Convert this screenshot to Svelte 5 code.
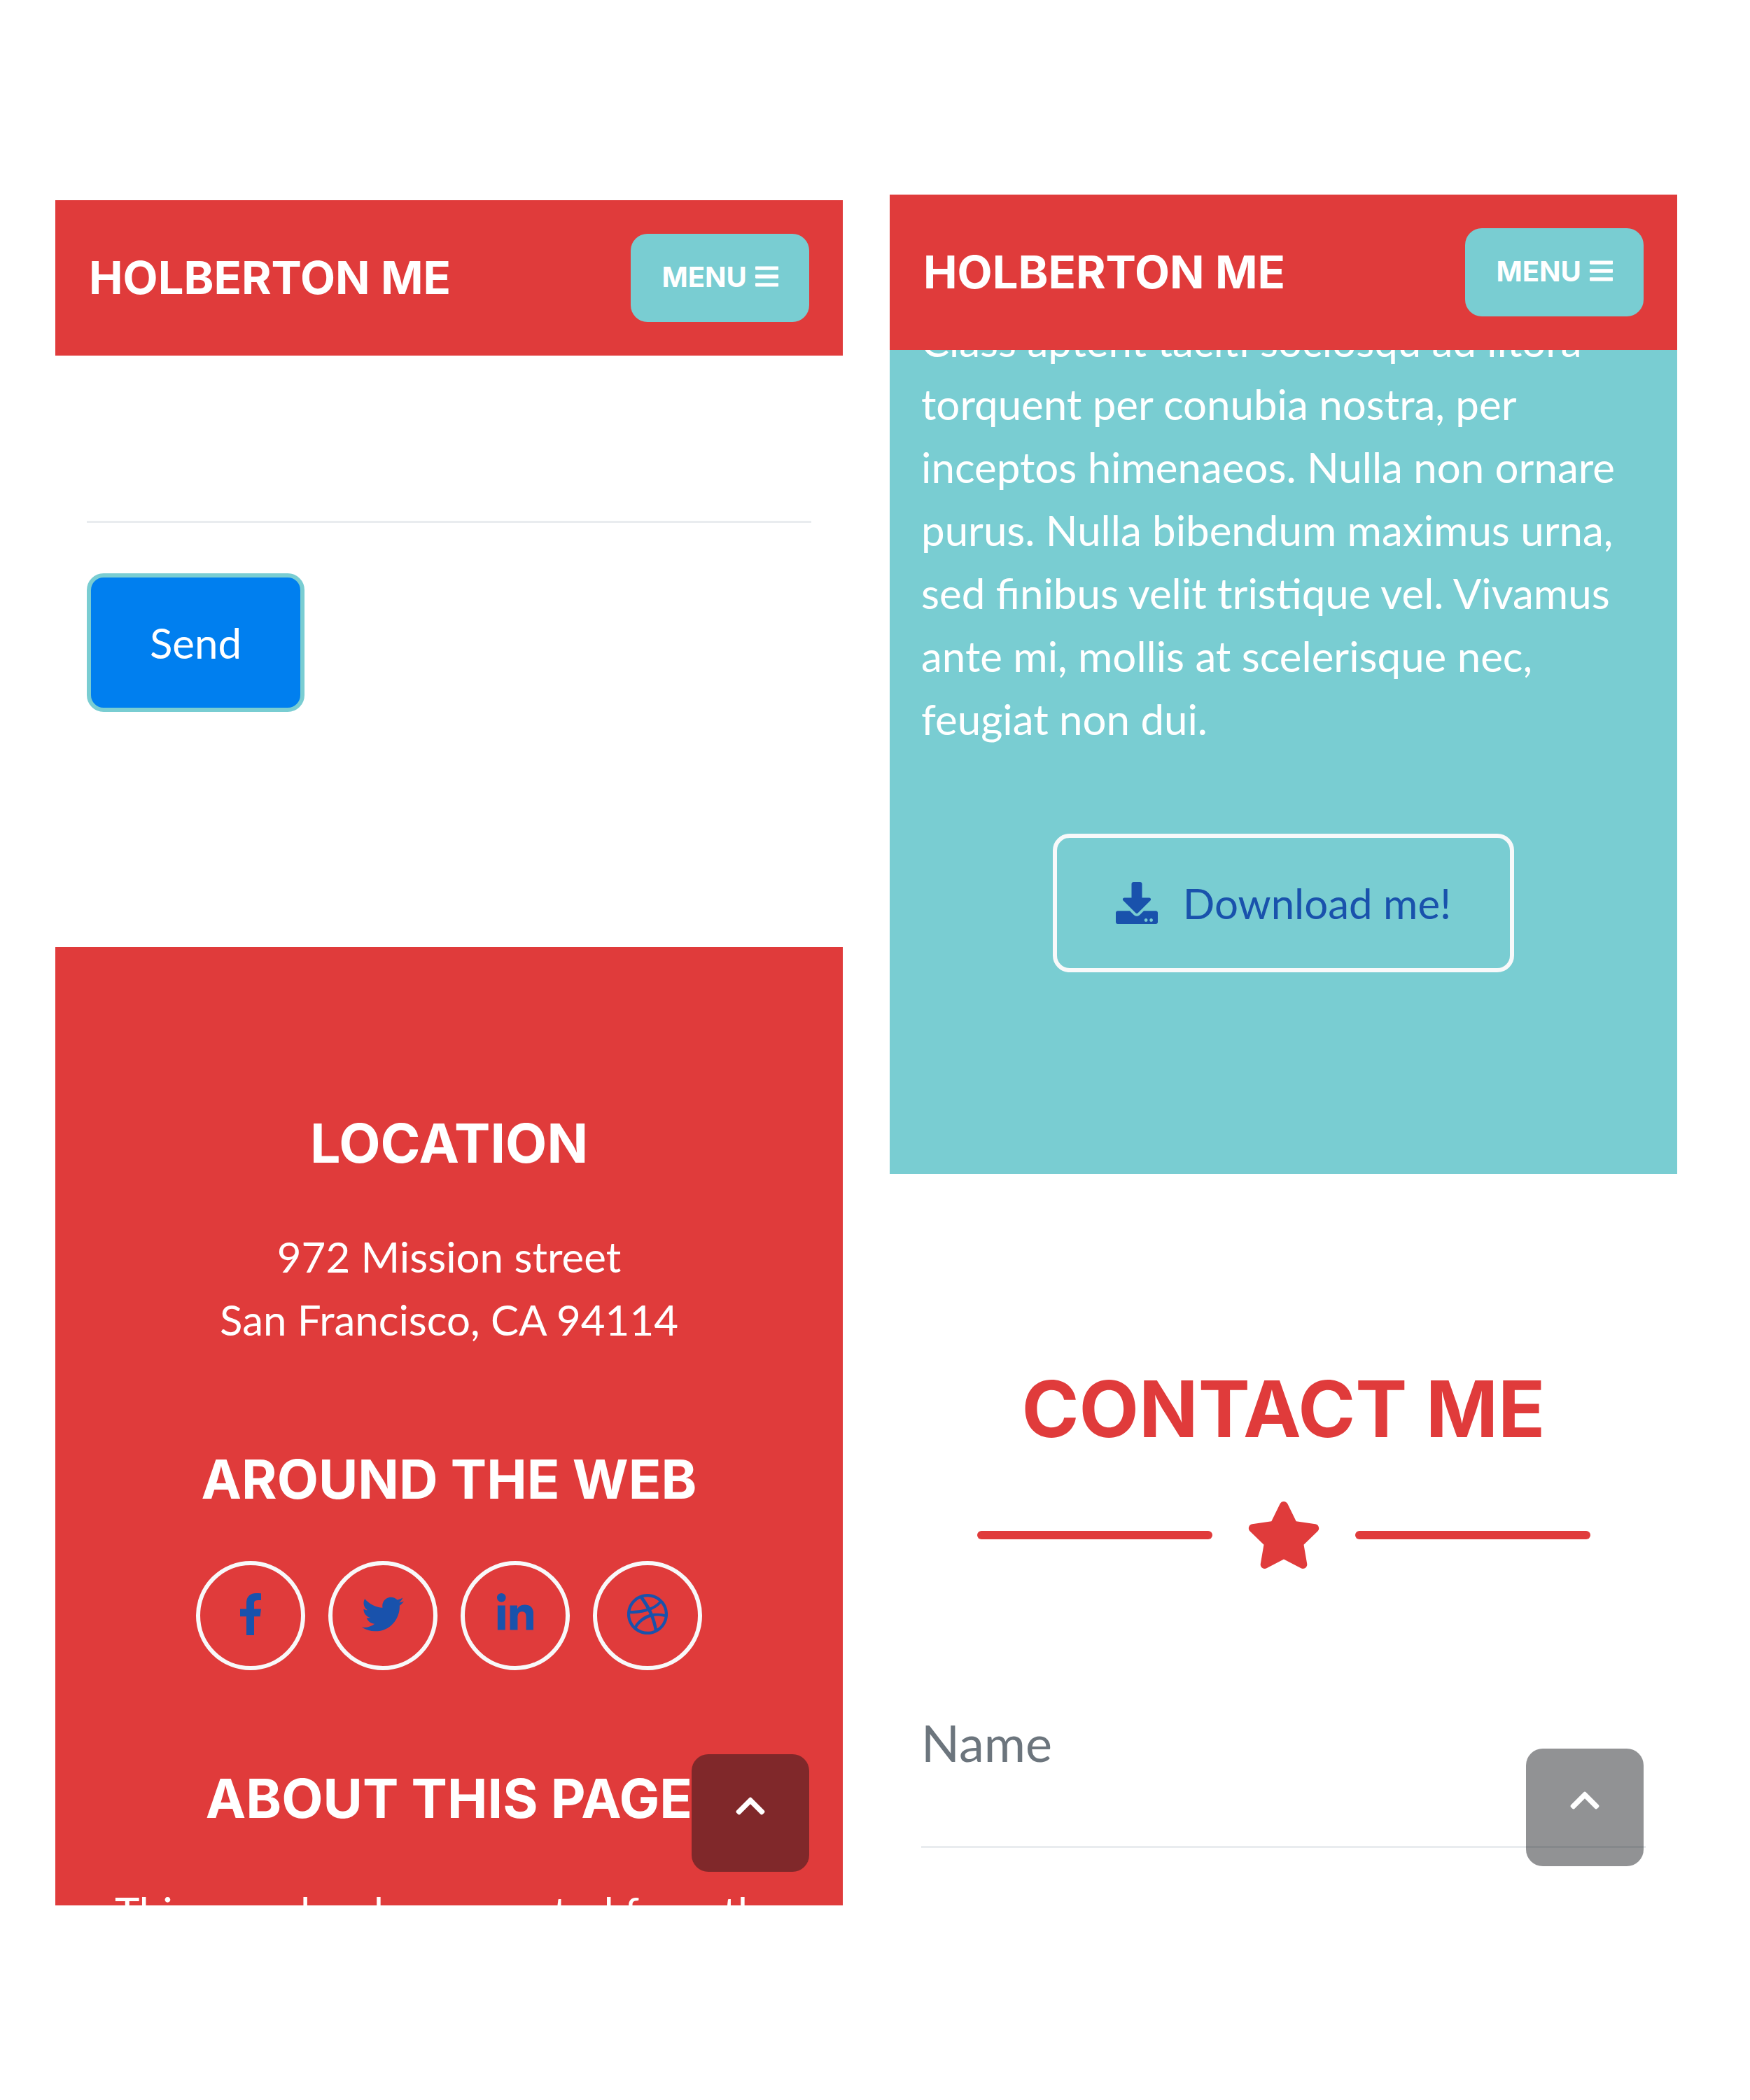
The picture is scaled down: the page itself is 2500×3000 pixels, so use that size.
<script>
  const socials = [
    {
      name: 'Facebook',
      width: 264,
      path: 'M76.7 512V283H0v-91h76.7v-71.7C76.7 42.4 124.3 0 193.8 0c33.3 0 61.9 2.5 70.2 3.6V85h-48.2c-37.8 0-45.1 18-45.1 44.3V192H256l-11.7 91h-73.6v229',
    },
    {
      name: 'Twitter',
      width: 512,
      path: 'M459.37 151.716c.325 4.548.325 9.097.325 13.645 0 138.72-105.583 298.558-298.558 298.558-59.452 0-114.68-17.219-161.137-47.106 8.447.974 16.568 1.299 25.34 1.299 49.055 0 94.213-16.568 130.274-44.832-46.132-.975-84.792-31.188-98.112-72.772 6.498.974 12.995 1.624 19.818 1.624 9.421 0 18.843-1.3 27.614-3.573-48.081-9.747-84.143-51.98-84.143-102.985v-1.299c13.969 7.797 30.214 12.67 47.431 13.319-28.264-18.843-46.781-51.005-46.781-87.391 0-19.492 5.197-37.36 14.294-52.954 51.655 63.675 129.3 105.258 216.365 109.807-1.624-7.797-2.599-15.918-2.599-24.04 0-57.828 46.782-104.934 104.934-104.934 30.213 0 57.502 12.67 76.67 33.137 23.715-4.548 46.456-13.32 66.599-25.34-7.798 24.366-24.366 44.833-46.132 57.827 21.117-2.273 41.584-8.122 60.426-16.243-14.292 20.791-32.161 39.308-52.628 54.253z',
    },
    {
      name: 'LinkedIn',
      width: 448,
      path: 'M100.28 448H7.4V148.9h92.88zM53.79 108.1C24.09 108.1 0 83.5 0 53.8a53.79 53.79 0 0 1 107.58 0c0 29.7-24.1 54.3-53.79 54.3zM447.9 448h-92.68V302.4c0-34.7-.7-79.2-48.29-79.2-48.29 0-55.69 37.7-55.69 76.7V448h-92.78V148.9h89.08v40.8h1.3c12.4-23.5 42.69-48.3 87.88-48.3 94 0 111.28 61.9 111.28 142.3V448z',
    },
    {
      name: 'Dribbble',
      width: 512,
      path: 'M256 8C119.252 8 8 119.252 8 256s111.252 248 248 248 248-111.252 248-248S392.748 8 256 8zm163.97 114.366c29.503 36.046 47.369 81.957 47.835 131.955-6.984-1.477-77.018-15.682-147.502-6.818-5.752-14.041-11.181-26.393-18.617-41.614 78.321-31.977 113.818-77.482 118.284-83.523zM396.421 97.87c-3.81 5.427-35.697 48.286-111.021 76.519-34.712-63.776-73.185-116.168-79.04-124.008 67.176-16.193 137.966 1.27 190.061 47.489zm-230.48-33.25c5.585 7.659 43.438 60.116 78.537 122.509-99.087 26.313-186.36 25.934-195.834 25.809C62.38 147.205 106.678 92.573 165.941 64.62zM44.17 256.323c0-2.166.043-4.322.108-6.473 9.268.19 111.92 1.513 217.706-30.146 6.064 11.868 11.857 23.915 17.174 35.949-76.599 21.575-146.194 83.527-180.531 142.306C64.794 360.405 44.17 310.73 44.17 256.323zm81.807 167.113c22.127-45.233 82.178-103.622 167.579-132.756 29.74 77.283 42.039 142.053 45.189 160.638-68.112 29.013-150.015 21.053-212.768-27.882zm248.38 8.489c-2.171-12.886-13.446-74.897-41.152-151.033 66.38-10.626 124.7 6.768 131.947 9.055-9.442 58.941-43.273 109.844-90.795 141.978z',
    },
  ];
</script>

{#snippet navbar()}
  <nav class="navbar">
    <a class="brand" href="#top">HOLBERTON ME</a>
    <button class="menu" type="button">
      MENU
      <svg class="bars" viewBox="0 0 448 512" aria-hidden="true">
        <path d="M16 132h416c8.837 0 16-7.163 16-16V76c0-8.837-7.163-16-16-16H16C7.163 60 0 67.163 0 76v40c0 8.837 7.163 16 16 16zm0 160h416c8.837 0 16-7.163 16-16v-40c0-8.837-7.163-16-16-16H16c-8.837 0-16 7.163-16 16v40c0 8.837 7.163 16 16 16zm0 160h416c8.837 0 16-7.163 16-16v-40c0-8.837-7.163-16-16-16H16c-8.837 0-16 7.163-16 16v40c0 8.837 7.163 16 16 16z" />
      </svg>
    </button>
  </nav>
{/snippet}

{#snippet scrollTop()}
  <a class="to-top" href="#top" aria-label="Back to top">
    <svg viewBox="0 0 448 512" aria-hidden="true">
      <path d="M240.971 130.524l194.343 194.343c9.373 9.373 9.373 24.569 0 33.941l-22.667 22.667c-9.357 9.357-24.522 9.375-33.901.04L224 227.495 69.255 381.516c-9.379 9.335-24.544 9.317-33.901-.04l-22.667-22.667c-9.373-9.373-9.373-24.569 0-33.941L207.03 130.525c9.372-9.373 24.568-9.373 33.941-.001z" />
    </svg>
  </a>
{/snippet}

<main class="page">
  <div class="screen lowered">
    {@render navbar()}
    <form class="send-form">
      <textarea class="field message" aria-label="Message"></textarea>
      <button class="send" type="button">Send</button>
    </form>
    <footer class="footer">
      <section>
        <h4>LOCATION</h4>
        <p>972 Mission street<br />San Francisco, CA 94114</p>
      </section>
      <section>
        <h4>AROUND THE WEB</h4>
        <div class="socials">
          {#each socials as social}
            <a class="social" href="#top" aria-label={social.name}>
              <svg viewBox="0 0 {social.width} 512" aria-hidden="true"><path d={social.path} /></svg>
            </a>
          {/each}
        </div>
      </section>
      <section>
        <h4>ABOUT THIS PAGE</h4>
        <p>This page has been created from the</p>
      </section>
    </footer>
    {@render scrollTop()}
  </div>

  <div class="screen">
    {@render navbar()}
    <section class="about">
      <p>
        Class aptent taciti sociosqu ad litora torquent per conubia nostra, per inceptos himenaeos.
        Nulla non ornare purus. Nulla bibendum maximus urna, sed finibus velit tristique vel.
        Vivamus ante mi, mollis at scelerisque nec, feugiat non dui.
      </p>
      <a class="download" href="#top">
        <svg viewBox="0 0 512 512" aria-hidden="true">
          <path d="M216 0h80c13.3 0 24 10.7 24 24v168h87.7c17.8 0 26.7 21.5 14.1 34.1L269.7 378.3c-7.5 7.5-19.8 7.5-27.3 0L90.1 226.1c-12.6-12.6-3.7-34.1 14.1-34.1H192V24c0-13.3 10.7-24 24-24zm296 376v112c0 13.3-10.7 24-24 24H24c-13.3 0-24-10.7-24-24V376c0-13.3 10.7-24 24-24h146.7l49 49c20.1 20.1 52.5 20.1 72.6 0l49-49H488c13.3 0 24 10.7 24 24zm-124 88c0-11-9-20-20-20s-20 9-20 20 9 20 20 20 20-9 20-20zm64 0c0-11-9-20-20-20s-20 9-20 20 9 20 20 20 20-9 20-20z" />
        </svg>
        Download me!
      </a>
    </section>
    <section class="contact">
      <h2>CONTACT ME</h2>
      <div class="divider">
        <span class="rule"></span>
        <svg viewBox="0 0 576 512" aria-hidden="true">
          <path d="M259.3 17.8L194 150.2 47.9 171.5c-26.2 3.8-36.7 36.1-17.7 54.6l105.7 103-25 145.5c-4.5 26.3 23.2 46 46.4 33.7L288 439.6l130.7 68.7c23.2 12.2 50.9-7.4 46.4-33.7l-25-145.5 105.7-103c19-18.5 8.5-50.8-17.7-54.6L382 150.2 316.7 17.8c-11.7-23.6-45.6-23.9-57.4 0z" />
        </svg>
        <span class="rule"></span>
      </div>
      <input class="field name" type="text" placeholder="Name" aria-label="Name" />
    </section>
    {@render scrollTop()}
  </div>
</main>

<style>
  :global(body) {
    margin: 0;
    background: #fff;
  }

  .page {
    --red: #e03b3b;
    --teal: #79cdd2;
    --blue: #1952ac;
    --light: #f8f9fa;
    display: grid;
    grid-template-columns: 1fr 1fr;
    align-items: start;
    gap: 67px;
    padding: 278px 104px 278px 79px;
    font-family: Lato, sans-serif;
    font-size: 60px;
    line-height: 90px;
  }

  .page :is(a, button) {
    box-sizing: border-box;
    text-decoration: none;
    font-family: inherit;
    cursor: pointer;
  }

  svg {
    display: block;
    flex: none;
    fill: currentColor;
  }

  h2,
  h4,
  p {
    margin: 0;
  }

  h2,
  h4,
  .navbar {
    font-family: Inter, sans-serif;
    font-weight: 700;
  }

  .screen {
    position: relative;
    display: flex;
    flex-direction: column;
    aspect-ratio: 1125 / 2436;
    min-height: 0;
    overflow: hidden;
  }

  .screen > * {
    flex: none;
  }

  .lowered {
    margin-top: 8px;
  }

  .navbar {
    display: flex;
    align-items: center;
    justify-content: space-between;
    padding: 48px;
    background: var(--red);
  }

  .brand {
    color: #fff;
    font-size: 65px;
  }

  .menu {
    display: flex;
    align-items: center;
    gap: 12px;
    height: 126px;
    padding: 0 44px 4px;
    border: 0;
    border-radius: 24px;
    background: var(--teal);
    color: #fff;
    font-size: 40px;
    font-weight: 700;
  }

  .bars {
    height: 38px;
  }

  .field {
    display: block;
    box-sizing: border-box;
    width: 100%;
    border: 0;
    border-bottom: 3px solid #e9ecef;
    border-radius: 0;
    outline: 0;
    background: none;
    font-family: inherit;
    font-size: 72px;
    line-height: 108px;
    resize: none;
  }

  .message {
    height: 239px;
  }

  .send-form {
    padding: 0 45px 336px;
  }

  .send {
    display: block;
    margin-top: 72px;
    padding: 48px 84px;
    border: 6px solid var(--teal);
    border-radius: 24px;
    background: #007fef;
    color: #fff;
    font-size: 60px;
    line-height: 90px;
  }

  .footer {
    display: flex;
    flex-direction: column;
    gap: 140px;
    padding: 237px 45px 240px;
    background: var(--red);
    color: #fff;
    text-align: center;
  }

  .footer section {
    display: flex;
    flex-direction: column;
    gap: 74px;
  }

  h4 {
    font-size: 77px;
    line-height: 86px;
  }

  .socials {
    display: flex;
    justify-content: center;
    gap: 33px;
  }

  .social {
    display: flex;
    align-items: center;
    justify-content: center;
    width: 156px;
    height: 156px;
    padding-bottom: 5px;
    border: 6px solid var(--light);
    border-radius: 50%;
    color: var(--blue);
  }

  .social svg,
  .download svg {
    height: 60px;
  }

  .to-top {
    position: absolute;
    right: 48px;
    bottom: 48px;
    display: flex;
    align-items: center;
    justify-content: center;
    width: 168px;
    height: 168px;
    padding-bottom: 20px;
    border-radius: 24px;
    background: rgba(15, 17, 22, 0.46);
    color: #fff;
  }

  .to-top svg {
    height: 48px;
  }

  .about {
    display: flex;
    flex-direction: column;
    align-items: center;
    gap: 119px;
    overflow: hidden;
    padding: 0 45px 288px;
    background: var(--teal);
    color: #fff;
  }

  /* The opening line is scrolled partly under the navigation bar. */
  .about p {
    margin-top: -58px;
  }

  .download {
    display: flex;
    align-items: center;
    gap: 36px;
    padding: 48px 84px;
    border: 6px solid var(--light);
    border-radius: 24px;
    color: var(--blue);
  }

  .contact {
    padding: 271px 45px 0;
    color: var(--red);
    text-align: center;
  }

  h2 {
    font-size: 111px;
    line-height: 130px;
  }

  .divider {
    display: flex;
    align-items: center;
    justify-content: center;
    gap: 48px;
    margin: 67px 0 194px;
  }

  .divider svg {
    height: 96px;
  }

  .rule {
    width: 336px;
    height: 12px;
    border-radius: 6px;
    background: currentColor;
  }

  .name {
    height: 205px;
    padding: 0 0 94px;
  }

  .name::placeholder {
    color: #6c757d;
    opacity: 1;
  }
</style>
